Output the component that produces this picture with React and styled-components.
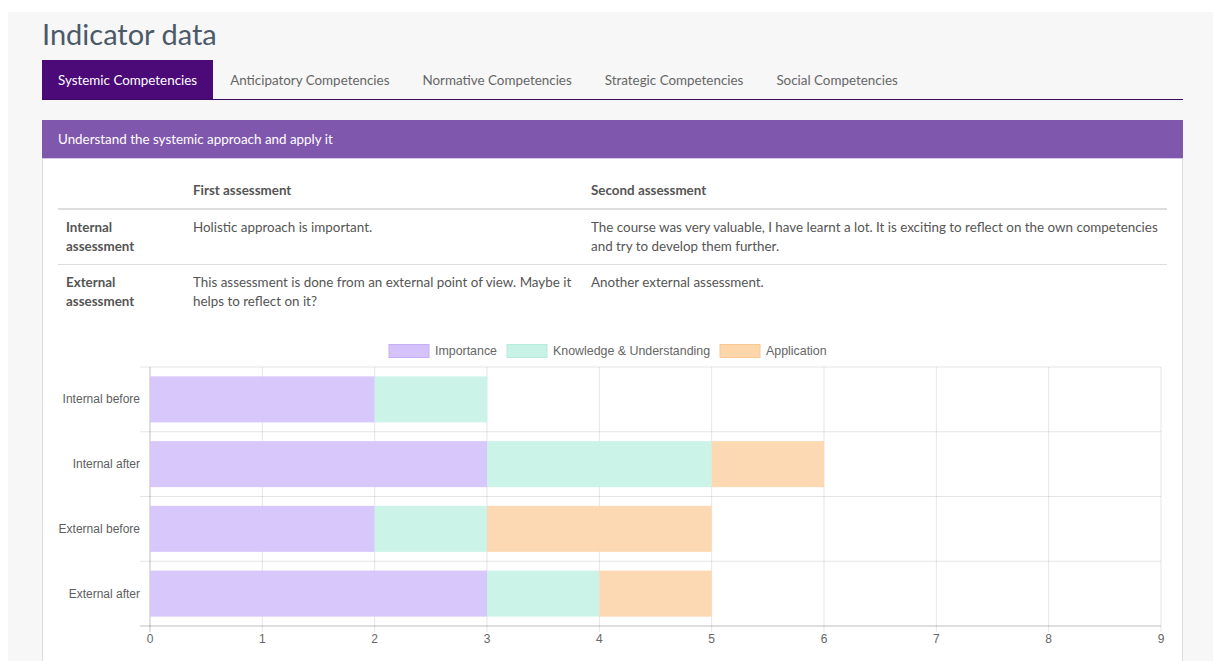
import React, { useState } from 'react';
import styled, { createGlobalStyle } from 'styled-components';

const tabs = [
  'Systemic Competencies',
  'Anticipatory Competencies',
  'Normative Competencies',
  'Strategic Competencies',
  'Social Competencies'
];

const rows = [
  {
    label: 'Internal assessment',
    first: 'Holistic approach is important.',
    second: 'The course was very valuable, I have learnt a lot. It is exciting to reflect on the own competencies and try to develop them further.'
  },
  {
    label: 'External assessment',
    first: 'This assessment is done from an external point of view. Maybe it helps to reflect on it?',
    second: 'Another external assessment.'
  }
];

// legend box x positions are fixed so the legend sits centred over the plot
const series = [
  { name: 'Importance', color: '#d5c2fb', stroke: '#c6aef6', x: 331 },
  { name: 'Knowledge & Understanding', color: '#c8f2e6', stroke: '#b5ecdc', x: 449 },
  { name: 'Application', color: '#fdd6ac', stroke: '#f9c893', x: 662 }
];

const chartData = [
  { label: 'Internal before', values: [2, 1, 0] },
  { label: 'Internal after', values: [3, 2, 1] },
  { label: 'External before', values: [2, 1, 2] },
  { label: 'External after', values: [3, 1, 1] }
];

// chart geometry (svg coordinates)
const W = 1110;
const H = 326;
const X0 = 92;
const X1 = 1103;
const TOP = 32;
const BOTTOM = 291;
const MAX = 9;
const unit = (X1 - X0) / MAX;
const rowH = (BOTTOM - TOP) / chartData.length;
const barH = 46;

const StackedChart = () => {
  const ticks = Array.from({ length: MAX + 1 }, (_, i) => i);
  const legendY = 16;

  return (
    <ChartSvg width={W} height={H} viewBox={`0 0 ${W} ${H}`}>
      {series.map(s => (
        <g key={s.name}>
          <rect x={s.x} y={legendY - 6.5} width={40} height={13} fill={s.color} stroke={s.stroke} strokeWidth="1" />
          <text x={s.x + 46} y={legendY + 4} fontSize="12.4" fill="#666">{s.name}</text>
        </g>
      ))}

      {/* vertical grid + x ticks */}
      {ticks.map(t => {
        const x = X0 + t * unit;
        return (
          <g key={t}>
            <line x1={x} y1={TOP} x2={x} y2={BOTTOM + 6} stroke={t === 0 ? 'rgba(0,0,0,0.25)' : 'rgba(0,0,0,0.1)'} strokeWidth="1" />
            <text x={x} y={BOTTOM + 17} fontSize="12" fill="#666" textAnchor="middle">{t}</text>
          </g>
        );
      })}

      {/* horizontal grid */}
      {chartData.map((_, i) => (
        <line key={i} x1={X0 - 10} y1={TOP + i * rowH} x2={X1} y2={TOP + i * rowH} stroke="rgba(0,0,0,0.1)" strokeWidth="1" />
      ))}
      <line x1={X0 - 10} y1={BOTTOM} x2={X1} y2={BOTTOM} stroke="rgba(0,0,0,0.25)" strokeWidth="1" />

      {chartData.map((d, i) => {
        const y = TOP + i * rowH + (rowH - barH) / 2;
        let acc = 0;
        return (
          <g key={d.label}>
            <text x={X0 - 10} y={TOP + i * rowH + rowH / 2 + 4} fontSize="12" fill="#5e5e5e" textAnchor="end">{d.label}</text>
            {d.values.map((v, j) => {
              const x = X0 + acc * unit;
              acc += v;
              if (!v) return null;
              return <rect key={j} x={x} y={y} width={v * unit} height={barH} fill={series[j].color} fillOpacity="0.92" />;
            })}
          </g>
        );
      })}
    </ChartSvg>
  );
};

const App = () => {
  const [active, setActive] = useState(0);

  return (
    <>
      <GlobalStyle />
      <Page>
        <Title>Indicator data</Title>
        <TabBar>
          {tabs.map((t, i) => (
            <Tab key={t} active={i === active} onClick={() => setActive(i)}>{t}</Tab>
          ))}
        </TabBar>

        <Panel>
          <PanelHeader>Understand the systemic approach and apply it</PanelHeader>
          <PanelBody>
            <Table>
              <colgroup>
                <col style={{ width: 127 }} />
                <col style={{ width: 398 }} />
                <col />
              </colgroup>
              <thead>
                <tr>
                  <Th />
                  <Th>First assessment</Th>
                  <Th>Second assessment</Th>
                </tr>
              </thead>
              <tbody>
                {rows.map(r => (
                  <tr key={r.label}>
                    <RowHead>{r.label}</RowHead>
                    <Td>{r.first}</Td>
                    <Td>{r.second}</Td>
                  </tr>
                ))}
              </tbody>
            </Table>
            <ChartWrap>
              <StackedChart />
            </ChartWrap>
          </PanelBody>
        </Panel>
      </Page>
    </>
  );
};

const GlobalStyle = createGlobalStyle`
  body {
    margin: 0;
    background: #ffffff;
    font-family: Lato, 'Open Sans', sans-serif;
  }
`;

const Page = styled.div`
  margin: 12px 0 0 8px;
  padding: 6px 30px 40px 34px;
  background: #f7f7f7;
  min-height: 700px;
`;

const Title = styled.h1`
  margin: 0 0 10px;
  font-size: 29px;
  font-weight: 400;
  line-height: 32px;
  color: #4c5a68;
`;

const TabBar = styled.div`
  display: flex;
  border-bottom: 1px solid #3a0b5c;
`;

const Tab = styled.div`
  padding: 0 16px;
  margin-right: 1px;
  height: 39px;
  display: flex;
  align-items: center;
  font-size: 13.4px;
  color: ${p => p.active ? '#ffffff' : '#666666'};
  background: ${p => p.active ? '#4b0a78' : 'transparent'};
  cursor: pointer;
`;

const Panel = styled.div`
  margin-top: 20px;
  background: #fff;
  border: 1px solid #dddddd;
  border-top: none;
`;

const PanelHeader = styled.div`
  margin: 0 -1px;
  height: 38px;
  padding: 0 16px;
  display: flex;
  align-items: center;
  background: #7f57ad;
  border-bottom: 1px solid #d7c6ea;
  color: #fff;
  font-size: 13.4px;
`;

const PanelBody = styled.div`
  padding: 14px 15px 0;
`;

const Table = styled.table`
  width: 100%;
  border-collapse: collapse;
  table-layout: fixed;
  font-size: 13.4px;
  line-height: 19px;
  color: #555;
`;

const Th = styled.th`
  text-align: left;
  font-weight: 700;
  padding: 8px;
  border-bottom: 2px solid #dddddd;
  color: #555;
`;

const Td = styled.td`
  vertical-align: top;
  padding: 8px;
  border-top: 1px solid #dddddd;
`;

const RowHead = styled(Td)`
  font-weight: 700;
`;

const ChartWrap = styled.div`
  margin-top: 16px;
`;

const ChartSvg = styled.svg`
  display: block;
  font-family: 'Liberation Sans', Arial, sans-serif;
`;

export default App;
